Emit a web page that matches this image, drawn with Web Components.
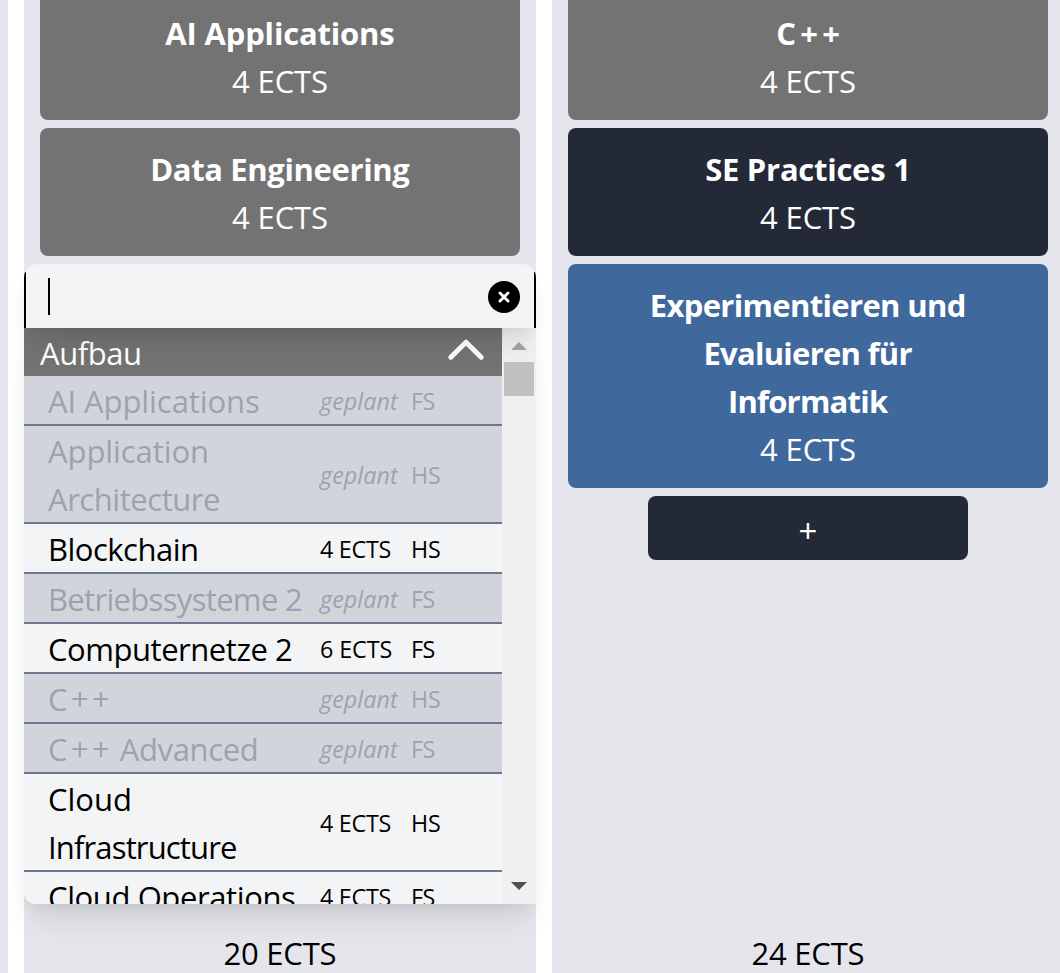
<!DOCTYPE html>
<html lang="de">
<head>
<meta charset="utf-8">
<title>Studienplan</title>
<style>
html,body{margin:0;height:973px;overflow:hidden;background:#fff}
body{font:31px/48px "Open Sans","Noto Sans",sans-serif;color:#000}
</style>
</head>
<body>
<plan-board>
  <plan-column edge></plan-column>
  <plan-column>
    <module-card><fit-text slot="title" w="229">AI Applications</fit-text><fit-text w="95">4 ECTS</fit-text></module-card>
    <module-card><fit-text slot="title" w="258">Data Engineering</fit-text><fit-text w="95">4 ECTS</fit-text></module-card>
    <module-picker>
      <picker-row planned term="FS"><fit-text w="211">AI Applications</fit-text></picker-row>
      <picker-row planned term="HS"><fit-text w="159">Application</fit-text><fit-text w="171">Architecture</fit-text></picker-row>
      <picker-row credits="4 ECTS" term="HS"><fit-text w="146">Blockchain</fit-text></picker-row>
      <picker-row planned term="FS"><fit-text w="251">Betriebssysteme 2</fit-text></picker-row>
      <picker-row credits="6 ECTS" term="FS"><fit-text w="243">Computernetze 2</fit-text></picker-row>
      <picker-row planned term="HS"><fit-text w="60">C++</fit-text></picker-row>
      <picker-row planned term="FS" inline><fit-text w="60">C++</fit-text><fit-text w="137">Advanced</fit-text></picker-row>
      <picker-row credits="4 ECTS" term="HS"><fit-text w="81">Cloud</fit-text><fit-text w="185">Infrastructure</fit-text></picker-row>
      <picker-row credits="4 ECTS" term="FS"><fit-text w="246">Cloud Operations</fit-text></picker-row>
    </module-picker>
    <fit-text slot="total" w="111">20 ECTS</fit-text>
  </plan-column>
  <plan-column>
    <module-card><fit-text slot="title" w="62">C++</fit-text><fit-text w="95">4 ECTS</fit-text></module-card>
    <module-card tone="dark"><fit-text slot="title" w="200">SE Practices 1</fit-text><fit-text w="95">4 ECTS</fit-text></module-card>
    <module-card tone="blue"><fit-text slot="title" w="313">Experimentieren und</fit-text><fit-text slot="title" w="207">Evaluieren für</fit-text><fit-text slot="title" w="159">Informatik</fit-text><fit-text w="95">4 ECTS</fit-text></module-card>
    <add-button>+</add-button>
    <fit-text slot="total" w="111">24 ECTS</fit-text>
  </plan-column>
</plan-board>
<script>
const define = (name, html, setup) => {
  const template = document.createElement('template');
  template.innerHTML = html;
  customElements.define(name, class extends HTMLElement {
    constructor() {
      super();
      this.attachShadow({mode: 'open'}).append(template.content.cloneNode(true));
    }
    connectedCallback() { if (setup) setup(this, this.shadowRoot); }
  });
};

define('plan-board', `<style>:host{display:flex;gap:16px;height:973px;overflow:hidden}</style><slot></slot>`);

define('plan-column', `<style>
:host{display:flex;flex-direction:column;gap:8px;flex:none;box-sizing:border-box;width:512px;height:984px;margin-top:-8px;padding:0 16px;background:#e5e6eb}
:host([edge]){width:8px;padding:0}
footer{margin-top:auto;text-align:center;height:48px}
</style><slot></slot><footer><slot name="total"></slot></footer>`);

define('module-card', `<style>
:host{display:block;flex:none;padding:16px 80px;border-radius:8px;background:#737373;color:#fff;text-align:center}
:host([tone=dark]){background:#232936}
:host([tone=blue]){background:#3f689c}
div{display:flex;flex-direction:column;align-items:center}
.title{font-weight:700}
</style><div class="title"><slot name="title"></slot></div><div><slot></slot></div>`);

define('add-button', `<style>
:host{display:block;flex:none;box-sizing:border-box;width:320px;height:64px;padding:11px 0 5px;margin:0 auto;border-radius:8px;background:#232936;color:#fff;text-align:center;font-size:33px}
</style><slot></slot>`);

define('picker-row', `<style>
:host{display:grid;grid-template-columns:272px 91px 1fr;align-items:center;padding-left:24px;border-bottom:2px solid #6b778f;background:#f3f4f6}
:host([planned]){background:#d1d5db;color:#9ea2ad}
.name{display:flex;flex-direction:column;align-items:flex-start}
:host([inline]) .name{flex-direction:row;gap:10px}
.meta{font-size:23.3px}
:host([planned]) .credits{font-style:italic}
</style><div class="name"><slot></slot></div><fit-text class="meta credits"></fit-text><fit-text class="meta term"></fit-text>`, (host, root) => {
  const credits = root.querySelector('.credits'), term = root.querySelector('.term');
  const planned = host.hasAttribute('planned');
  credits.textContent = planned ? 'geplant' : host.getAttribute('credits');
  credits.setAttribute('w', planned ? 81 : 70.5);
  term.textContent = host.getAttribute('term');
  term.setAttribute('w', term.textContent === 'FS' ? 21.5 : 27);
});

define('module-picker', `<style>
:host{display:block;position:relative;height:0;margin:0 -16px;z-index:2}
.panel{position:absolute;top:0;left:0;width:512px;height:640px}
.search{position:relative;z-index:1;display:flex;align-items:center;justify-content:space-between;box-sizing:border-box;height:64px;padding:0 16px 0 24px;background:linear-gradient(#000,#000) 0 100%/2px 56px no-repeat,linear-gradient(#000,#000) 100% 100%/2px 56px no-repeat,#f3f4f6;border-radius:14px 14px 0 0;box-shadow:0 20px 30px -6px rgba(0,0,0,.1),0 8px 12px -4px rgba(0,0,0,.05)}
.caret{width:2px;height:37px;background:#000}
.close{display:block;width:32px;height:32px;margin-top:2px}
.body{display:flex;height:576px;overflow:hidden;border-radius:0 0 0 12px;background:#f3f4f6}
.shade{border-radius:0 0 0 12px;box-shadow:0 20px 30px -6px rgba(0,0,0,.1),0 8px 12px -4px rgba(0,0,0,.05)}
.list{width:478px;height:576px;overflow:hidden}
.group{display:flex;align-items:center;justify-content:space-between;height:48px;padding:0 16px;background:#737373;color:#fff}
.bar{display:flex;flex-direction:column;align-items:center;width:34px;background:#f0f0f0}
.thumb{width:30px;height:34px;background:#c1c1c1}
.bar svg{display:block;height:34px;width:34px}
.bar svg:last-child{margin-top:auto}
</style>
<div class="panel">
  <div class="search"><span class="caret"></span>
    <svg class="close" viewBox="0 0 32 32"><circle cx="16" cy="16" r="16"/><path d="M12 12l8 8M20 12l-8 8" stroke="#fff" stroke-width="3" stroke-linecap="round"/></svg>
  </div>
  <div class="shade"><div class="body">
    <div class="list">
      <div class="group"><fit-text w="100">Aufbau</fit-text><svg width="40" height="48" viewBox="0 0 40 48"><path d="M4.8 29.2L20 14.2L35.2 29.2" fill="none" stroke="#fff" stroke-width="5" stroke-linecap="round" stroke-linejoin="round"/></svg></div>
      <slot></slot>
    </div>
    <div class="bar">
      <svg viewBox="0 0 34 34"><path d="M9 22L17 14L25 22z" fill="#a3a3a3"/></svg>
      <div class="thumb"></div>
      <svg viewBox="0 0 34 34"><path d="M9 12L17 20L25 12z" fill="#505050"/></svg>
    </div>
  </div></div>
</div>`);

/* Spreads its letters so that the glyphs span the width given in "w". */
const pen = document.createElement('canvas').getContext('2d');
define('fit-text', `<style>
:host{display:inline-block;line-height:46px;padding-top:2px;height:46px;white-space:nowrap}
</style><slot></slot>`, host => {
  const css = getComputedStyle(host), text = host.textContent;
  pen.font = `${css.fontStyle} ${css.fontWeight} ${css.fontSize} ${css.fontFamily}`;
  const m = pen.measureText(text);
  const ink = m.actualBoundingBoxRight + m.actualBoundingBoxLeft;
  const gap = (host.getAttribute('w') - ink) / (text.length - 1);
  host.style.letterSpacing = gap.toFixed(3) + 'px';
  host.style.marginRight = (-gap).toFixed(3) + 'px';
});
</script>
</body>
</html>
